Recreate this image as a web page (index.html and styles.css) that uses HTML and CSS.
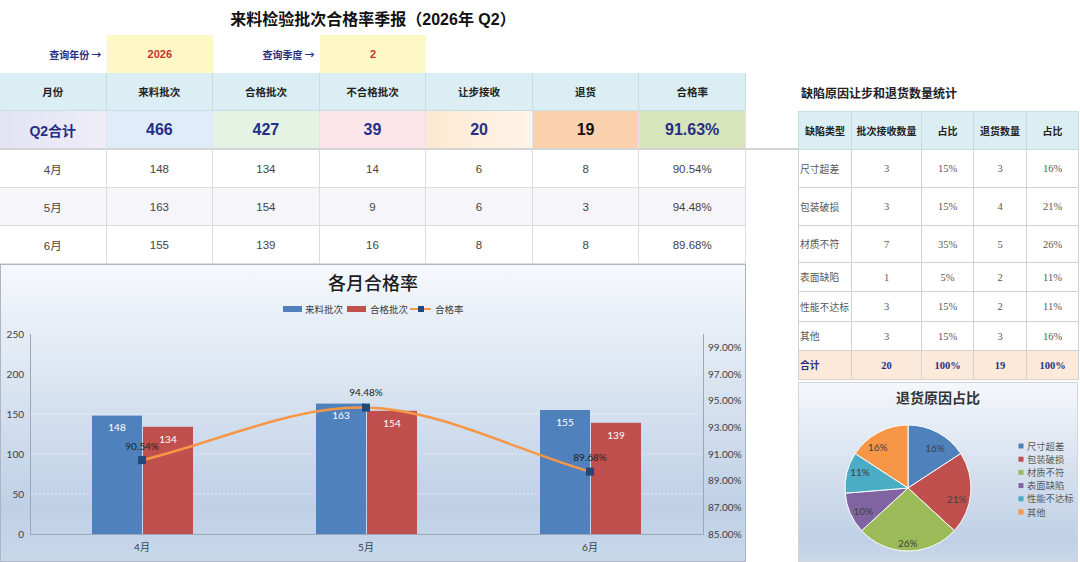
FILE: index.html
```html
<!DOCTYPE html>
<html lang="zh">
<head>
<meta charset="utf-8">
<title>来料检验批次合格率季报</title>
<link rel="stylesheet" href="styles.css">
</head>
<body>
<div class="page">
  <div class="left">
    <div class="title">来料检验批次合格率季报（2026年 Q2）</div>
    <div class="grid query">
      <div class="q-label">查询年份 →</div>
      <div class="q-val">2026</div>
      <div class="q-label">查询季度 →</div>
      <div class="q-val">2</div>
      <div></div><div></div><div></div><div></div>
    </div>
    <div class="grid head">
      <div class="c">月份</div>
      <div class="c">来料批次</div>
      <div class="c">合格批次</div>
      <div class="c">不合格批次</div>
      <div class="c">让步接收</div>
      <div class="c">退货</div>
      <div class="c">合格率</div>
      <div class="sp"></div>
    </div>
    <div class="grid sum">
      <div class="c s-label">Q2合计</div>
      <div class="c s-in">466</div>
      <div class="c s-ok">427</div>
      <div class="c s-ng">39</div>
      <div class="c s-con">20</div>
      <div class="c s-ret">19</div>
      <div class="c s-rate">91.63%</div>
      <div class="sp"></div>
    </div>
    <div class="grid row">
      <div class="c">4月</div><div class="c">148</div><div class="c">134</div><div class="c">14</div><div class="c">6</div><div class="c">8</div><div class="c">90.54%</div><div class="sp"></div>
    </div>
    <div class="grid row alt">
      <div class="c">5月</div><div class="c">163</div><div class="c">154</div><div class="c">9</div><div class="c">6</div><div class="c">3</div><div class="c">94.48%</div><div class="sp"></div>
    </div>
    <div class="grid row">
      <div class="c">6月</div><div class="c">155</div><div class="c">139</div><div class="c">16</div><div class="c">8</div><div class="c">8</div><div class="c">89.68%</div><div class="sp"></div>
    </div>
    <div class="chart">
      <svg class="chart-svg" width="746" height="298" viewBox="0 0 746 298">
        <defs>
          <linearGradient id="cbg" x1="0" y1="0" x2="0" y2="1">
            <stop offset="0" stop-color="#f6f8fc"/>
            <stop offset="0.45" stop-color="#d7e2f0"/>
            <stop offset="0.82" stop-color="#bfd0e6"/>
            <stop offset="1" stop-color="#c9d7ea"/>
          </linearGradient>
        </defs>
        <rect x="0.5" y="0.5" width="745" height="297" fill="url(#cbg)" stroke="#aab6c6"/>
        <text class="ch-title" x="373" y="26" text-anchor="middle">各月合格率</text>
        <rect x="283" y="42" width="19" height="6" fill="#4f81bd"/>
        <text class="lg" x="305" y="48.5">来料批次</text>
        <rect x="347" y="42" width="19" height="6" fill="#c0504d"/>
        <text class="lg" x="370" y="48.5">合格批次</text>
        <line x1="410" y1="45" x2="431" y2="45" stroke="#f79646" stroke-width="2"/>
        <rect x="418" y="42" width="6" height="6" fill="#1f497d"/>
        <text class="lg" x="435" y="48.5">合格率</text>

        <g class="grid-lines">
          <line x1="31" y1="70" x2="703" y2="70"/>
          <line x1="31" y1="110" x2="703" y2="110"/>
          <line x1="31" y1="150" x2="703" y2="150"/>
          <line x1="31" y1="190" x2="703" y2="190"/>
          <line x1="31" y1="230" x2="703" y2="230"/>
        </g>
        <g class="axis">
          <line x1="30.5" y1="70" x2="30.5" y2="270"/>
          <line x1="30" y1="270.5" x2="703" y2="270.5"/>
          <line x1="703.5" y1="70" x2="703.5" y2="271"/>
        </g>
        <g class="ax-l">
          <text x="24" y="273.5">0</text>
          <text x="24" y="233.5">50</text>
          <text x="24" y="193.5">100</text>
          <text x="24" y="153.5">150</text>
          <text x="24" y="113.5">200</text>
          <text x="24" y="73.5">250</text>
        </g>
        <g class="ax-r">
          <text x="708" y="273.5">85.00%</text>
          <text x="708" y="246.8">87.00%</text>
          <text x="708" y="220.2">89.00%</text>
          <text x="708" y="193.5">91.00%</text>
          <text x="708" y="166.8">93.00%</text>
          <text x="708" y="140.2">95.00%</text>
          <text x="708" y="113.5">97.00%</text>
          <text x="708" y="86.8">99.00%</text>
        </g>
        <g class="ax-c">
          <text x="142" y="287">4月</text>
          <text x="366" y="287">5月</text>
          <text x="590" y="287">6月</text>
        </g>

        <rect x="92" y="151.6" width="50" height="118.4" fill="#4f81bd"/>
        <rect x="143" y="162.8" width="50" height="107.2" fill="#c0504d"/>
        <rect x="316" y="139.6" width="50" height="130.4" fill="#4f81bd"/>
        <rect x="367" y="146.8" width="50" height="123.2" fill="#c0504d"/>
        <rect x="540" y="146" width="50" height="124" fill="#4f81bd"/>
        <rect x="591" y="158.8" width="50" height="111.2" fill="#c0504d"/>
        <g class="bar-lb">
          <text x="117" y="167">148</text>
          <text x="168" y="178.5">134</text>
          <text x="341" y="155">163</text>
          <text x="392" y="162.5">154</text>
          <text x="565" y="161.5">155</text>
          <text x="616" y="174.5">139</text>
        </g>

        <path d="M142 196.1 C216.7 178.6 291.3 141.7 366 143.6 C440.7 145.5 515.3 186.3 590 207.6" fill="none" stroke="#f79646" stroke-width="2.5"/>
        <rect x="138" y="192.1" width="8" height="8" fill="#1f497d"/>
        <rect x="362" y="139.6" width="8" height="8" fill="#1f497d"/>
        <rect x="586" y="203.6" width="8" height="8" fill="#1f497d"/>
        <g class="pt-lb">
          <text x="142" y="185.5">90.54%</text>
          <text x="366" y="132">94.48%</text>
          <text x="590" y="196.5">89.68%</text>
        </g>
      </svg>
    </div>
  </div>

  <div class="right">
    <div class="rtitle">缺陷原因让步和退货数量统计</div>
    <table class="rtable">
      <colgroup>
        <col class="w1"><col class="w2"><col class="w3"><col class="w4"><col class="w5">
      </colgroup>
      <tr class="rh"><th>缺陷类型</th><th>批次接收数量</th><th>占比</th><th>退货数量</th><th>占比</th></tr>
      <tr class="r38"><td class="nm">尺寸超差</td><td>3</td><td>15%</td><td>3</td><td>16%</td></tr>
      <tr class="r38"><td class="nm">包装破损</td><td>3</td><td>15%</td><td>4</td><td>21%</td></tr>
      <tr class="r37"><td class="nm">材质不符</td><td>7</td><td>35%</td><td>5</td><td>26%</td></tr>
      <tr class="r29"><td class="nm">表面缺陷</td><td>1</td><td>5%</td><td>2</td><td>11%</td></tr>
      <tr class="r30"><td class="nm">性能不达标</td><td>3</td><td>15%</td><td>2</td><td>11%</td></tr>
      <tr class="r29"><td class="nm">其他</td><td>3</td><td>15%</td><td>3</td><td>16%</td></tr>
      <tr class="r29 tot"><td class="nm">合计</td><td>20</td><td>100%</td><td>19</td><td>100%</td></tr>
    </table>
    <div class="pie">
      <svg class="pie-svg" width="280" height="180" viewBox="0 0 280 180">
        <defs>
          <linearGradient id="pbg" x1="0" y1="0" x2="0" y2="1">
            <stop offset="0" stop-color="#f5f7fb"/>
            <stop offset="0.5" stop-color="#d5e0ee"/>
            <stop offset="0.88" stop-color="#bfd0e6"/>
            <stop offset="1" stop-color="#cad8ea"/>
          </linearGradient>
        </defs>
        <rect x="0.5" y="0.5" width="279" height="179" fill="url(#pbg)" stroke="#d0d6de"/>
        <text class="pie-title" x="140" y="21" text-anchor="middle">退货原因占比</text>
        <g class="slices">
          <path d="M110 106 L110 43 A63 63 0 0 1 162.74 71.55 Z" fill="#4f81bd"/>
          <path d="M110 106 L162.74 71.55 A63 63 0 0 1 156.35 148.67 Z" fill="#c0504d"/>
          <path d="M110 106 L156.35 148.67 A63 63 0 0 1 63.65 148.67 Z" fill="#9bbb59"/>
          <path d="M110 106 L63.65 148.67 A63 63 0 0 1 47.22 111.2 Z" fill="#8064a2"/>
          <path d="M110 106 L47.22 111.2 A63 63 0 0 1 57.26 71.55 Z" fill="#4bacc6"/>
          <path d="M110 106 L57.26 71.55 A63 63 0 0 1 110 43 Z" fill="#f79646"/>
        </g>
        <g class="pie-lb">
          <text x="137" y="69.5">16%</text>
          <text x="158.7" y="120.5">21%</text>
          <text x="109.7" y="164.8">26%</text>
          <text x="65.3" y="132.5">10%</text>
          <text x="62" y="93.8">11%</text>
          <text x="79.7" y="69.2">16%</text>
        </g>
        <g class="pie-lg">
          <rect x="220.5" y="61.5" width="5" height="5" fill="#4f81bd"/>
          <text x="229" y="67.5">尺寸超差</text>
          <rect x="220.5" y="74.7" width="5" height="5" fill="#c0504d"/>
          <text x="229" y="80.7">包装破损</text>
          <rect x="220.5" y="87.9" width="5" height="5" fill="#9bbb59"/>
          <text x="229" y="93.9">材质不符</text>
          <rect x="220.5" y="101.1" width="5" height="5" fill="#8064a2"/>
          <text x="229" y="107.1">表面缺陷</text>
          <rect x="220.5" y="114.3" width="5" height="5" fill="#4bacc6"/>
          <text x="229" y="120.3">性能不达标</text>
          <rect x="220.5" y="127.5" width="5" height="5" fill="#f79646"/>
          <text x="229" y="133.5">其他</text>
        </g>
      </svg>
    </div>
  </div>
</div>
</body>
</html>
```

FILE: styles.css
```css
html, body {
  margin: 0;
  padding: 0;
  background: #ffffff;
}
body {
  font-family: "Liberation Sans", "Noto Sans CJK SC", sans-serif;
  color: #333;
}
.page {
  display: flex;
  width: 1080px;
  height: 562px;
  overflow: hidden;
}
.left {
  width: 798px;
  flex: none;
}
.title {
  width: 746px;
  height: 35px;
  display: flex;
  align-items: center;
  justify-content: center;
  font-size: 16px;
  font-weight: 700;
  color: #111;
}
.grid {
  display: grid;
  grid-template-columns: repeat(7, 106.57px) 52px;
}
.c {
  display: flex;
  align-items: center;
  justify-content: center;
  box-sizing: border-box;
}
.query {
  height: 38px;
}
.query > div {
  display: flex;
  align-items: center;
}
.q-label {
  justify-content: flex-end;
  padding-right: 5px;
  font-family: "Noto Sans CJK SC", sans-serif;
  font-size: 10px;
  font-weight: 700;
  color: #2a2e80;
}
.q-val {
  background: #fdf8c4;
  justify-content: center;
  color: #c8332b;
  font-weight: 700;
  font-size: 11px;
}
.head {
  height: 38px;
}
.head .c {
  background: #daeef3;
  border-right: 1px solid #c6dde4;
  border-bottom: 1px solid #c6dde4;
  font-family: "Noto Sans CJK SC", sans-serif;
  font-size: 10.5px;
  font-weight: 700;
  color: #222;
}
.sum {
  height: 39px;
}
.sum .c {
  font-size: 16px;
  font-weight: 700;
  color: #252f85;
  border-right: 1px solid #e2e2e8;
  border-bottom: 2px solid #d4d4d4;
}
.sum .sp {
  border-bottom: 2px solid #d4d4d4;
}
.sum .s-label {
  font-size: 14px;
  background: linear-gradient(90deg, #e4e3f3, #eeedf8);
}
.s-in { background: #dfedfb; }
.s-ok { background: #e5f3e5; }
.s-ng { background: #fde6ea; }
.s-con { background: linear-gradient(90deg, #fde9d1, #fff4e8); }
.sum .s-ret { background: #fbd1ad; color: #111; }
.s-rate { background: #d7e4bc; }
.row {
  height: 38px;
}
.row .c {
  font-size: 11.5px;
  color: #444;
  border-right: 1px solid #dcdcdc;
  border-bottom: 1px solid #dcdcdc;
  background: #ffffff;
}
.row.alt .c {
  background: #f5f5fa;
}
.chart {
  width: 746px;
  height: 298px;
}
.chart-svg, .pie-svg {
  display: block;
}
.ch-title {
  font-family: "Noto Sans CJK SC", sans-serif;
  font-size: 18px;
  font-weight: 500;
  fill: #1a1a1a;
}
.lg {
  font-family: "Noto Sans CJK SC", sans-serif;
  font-size: 9.5px;
  fill: #404040;
}
.grid-lines line {
  stroke: #ffffff;
  stroke-opacity: 0.6;
  stroke-dasharray: 2 2;
}
.axis line {
  stroke: #9aa8ba;
  stroke-width: 1;
}
.ax-l text, .ax-r text, .ax-c text {
  font-family: "Lato", "Noto Sans CJK SC", sans-serif;
  font-size: 10px;
  fill: #404040;
}
.ax-l text { text-anchor: end; }
.ax-c text { text-anchor: middle; }
.bar-lb text {
  font-family: "Lato", sans-serif;
  font-size: 10px;
  fill: #ffffff;
  text-anchor: middle;
}
.pt-lb text {
  font-family: "Lato", sans-serif;
  font-size: 10px;
  fill: #222;
  text-anchor: middle;
}
.right {
  width: 280px;
  flex: none;
  display: flex;
  flex-direction: column;
}
.rtitle {
  height: 38px;
  margin-top: 74px;
  display: flex;
  align-items: center;
  padding-left: 3px;
  font-family: "Noto Sans CJK SC", sans-serif;
  font-size: 12px;
  font-weight: 700;
  color: #222;
}
.rtable {
  border-collapse: collapse;
  width: 280px;
  table-layout: fixed;
  font-family: "Liberation Serif", "Noto Sans CJK SC", serif;
  font-size: 10.5px;
  color: #595959;
}
.w1 { width: 53px; }
.w2 { width: 70px; }
.w3 { width: 52px; }
.w4 { width: 53px; }
.w5 { width: 52px; }
.rtable th, .rtable td {
  border: 1px solid #d2d2d2;
  padding: 0;
  text-align: center;
  white-space: nowrap;
  overflow: hidden;
}
.rtable th {
  background: #daeef3;
  font-family: "Noto Sans CJK SC", sans-serif;
  font-size: 10px;
  font-weight: 700;
  color: #222;
  border-color: #c6dde4;
}
.rh { height: 38px; }
.r38 { height: 38px; }
.r37 { height: 37px; }
.r30 { height: 30px; }
.r29 { height: 29px; }
.rtable td.nm {
  text-align: left;
  padding-left: 1px;
  font-family: "Noto Sans CJK SC", sans-serif;
  font-size: 9.8px;
}
.tot td {
  background: #fde9d9;
  color: #262f86;
  font-weight: 700;
}
.pie {
  margin-top: 2px;
  width: 280px;
  height: 180px;
}
.pie-title {
  font-family: "Noto Sans CJK SC", sans-serif;
  font-size: 14px;
  font-weight: 700;
  fill: #333;
}
.slices path {
  stroke: #ffffff;
  stroke-width: 1;
}
.pie-lb text {
  font-family: "Lato", sans-serif;
  font-size: 10px;
  fill: #404040;
  text-anchor: middle;
}
.pie-lg text {
  font-family: "Noto Sans CJK SC", sans-serif;
  font-size: 9.3px;
  fill: #595959;
}
```
